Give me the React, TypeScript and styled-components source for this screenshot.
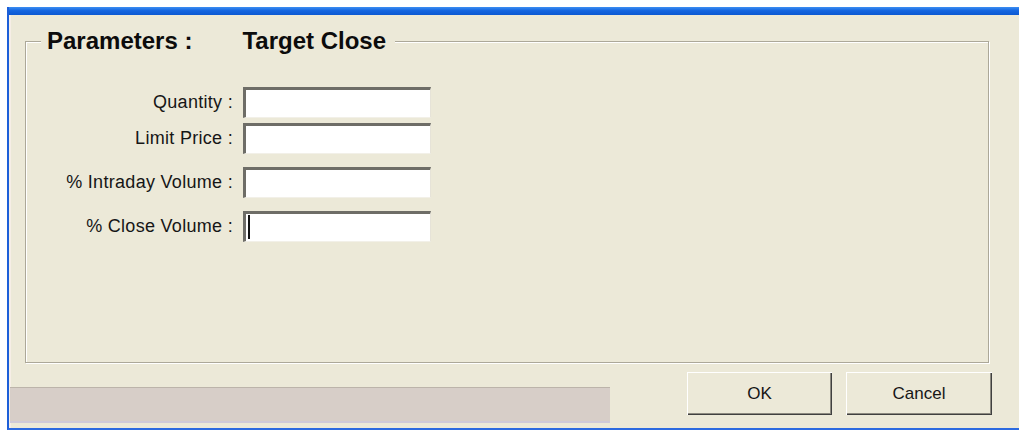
import styled, { createGlobalStyle } from 'styled-components';

const GlobalStyle = createGlobalStyle`
  html, body {
    margin: 0;
    padding: 0;
    background: #ffffff;
  }

  body {
    font-family: 'Liberation Sans', Arial, sans-serif;
    color: #111111;
  }
`;

const fields = [
  { label: 'Quantity :', gap: 0 },
  { label: 'Limit Price :', gap: 5 },
  { label: '% Intraday Volume :', gap: 13 },
  { label: '% Close Volume :', gap: 13, focused: true },
];

function App() {
  return (
    <>
      <GlobalStyle />
      <Page>
        <Window>
          <TitleStrip />
          <Client>
            <Group>
              <GroupTitle>
                <span>Parameters :</span>
                <GroupName>Target Close</GroupName>
              </GroupTitle>
              {fields.map((f) => (
                <Row key={f.label} $gap={f.gap}>
                  <Label>{f.label}</Label>
                  <FieldBox>
                    <TextInput type="text" defaultValue="" readOnly />
                    {f.focused && <Caret />}
                  </FieldBox>
                </Row>
              ))}
            </Group>

            <BottomRow>
              <StatusBar />
              <Buttons>
                <Button type="button">OK</Button>
                <Button type="button" $wide>
                  Cancel
                </Button>
              </Buttons>
            </BottomRow>
          </Client>
        </Window>
      </Page>
    </>
  );
}

export default App;

const Page = styled.div`
  width: 1019px;
  height: 430px;
  box-sizing: border-box;
  padding: 7px 0 0 7px;
  background: #ffffff;
  overflow: hidden;
`;

const Window = styled.div`
  display: flex;
  flex-direction: column;
  height: 423px;
  box-sizing: border-box;
  border-left: 2px solid #1d5fd8;
  border-bottom: 2px solid #2c6ae0;
`;

const TitleStrip = styled.div`
  height: 8px;
  flex-shrink: 0;
  background: linear-gradient(180deg, #3d8ef2 0%, #1466e0 45%, #0b58d2 100%);
`;

const Client = styled.div`
  flex: 1;
  display: flex;
  flex-direction: column;
  background: #ece9d8;
  box-shadow: inset 2px 0 0 #f6eee6;
`;

const Group = styled.fieldset`
  margin: 13px 30px 0 16px;
  padding: 33px 0 0 0;
  height: 335px;
  box-sizing: border-box;
  border: 1px solid #aca899;
  box-shadow: 1px 1px 0 #ffffff, inset 1px 1px 0 #ffffff;
  min-width: 0;
`;

const GroupTitle = styled.legend`
  margin-left: 15px;
  padding: 0 9px 0 6px;
  background: #ece9d8;
  font-size: 24px;
  line-height: 26px;
  font-weight: 700;
  color: #0c0c0c;
  white-space: nowrap;
`;

const GroupName = styled.span`
  margin-left: 50px;
`;

const Row = styled.div<{ $gap: number }>`
  display: grid;
  grid-template-columns: 207px 188px;
  column-gap: 10px;
  align-items: center;
  height: 31px;
  margin-top: ${(p) => p.$gap}px;
`;

const Label = styled.label`
  text-align: right;
  font-size: 18px;
  letter-spacing: 0.3px;
  color: #161616;
  white-space: nowrap;
`;

const FieldBox = styled.div`
  position: relative;
  height: 31px;
`;

const TextInput = styled.input`
  display: block;
  width: 188px;
  height: 31px;
  box-sizing: border-box;
  margin: 0;
  padding: 0 4px;
  background: #ffffff;
  border-style: solid;
  border-width: 3px 1px 1px 3px;
  border-color: #6e6d67 #e6e3d8 #f2f0e8 #6e6d67;
  outline: none;
  font-family: 'Liberation Sans', Arial, sans-serif;
  font-size: 17px;
`;

const Caret = styled.span`
  position: absolute;
  left: 5px;
  top: 4px;
  width: 2px;
  height: 24px;
  background: #111111;
`;

const BottomRow = styled.div`
  flex: 1;
  display: flex;
  align-items: flex-start;
  padding-right: 27px;
`;

const StatusBar = styled.div`
  width: 600px;
  height: 33px;
  margin: 24px 0 0 1px;
  background: #d7cec8;
  border-top: 1px solid #bcb4aa;
  border-bottom: 2px solid #cfcad8;
`;

const Buttons = styled.div`
  display: flex;
  gap: 14px;
  margin-left: auto;
  margin-top: 9px;
`;

const Button = styled.button<{ $wide?: boolean }>`
  width: ${(p) => (p.$wide ? 146 : 145)}px;
  height: 43px;
  margin: 0;
  padding: 0;
  background: #ece9d8;
  border: none;
  box-shadow: inset 1px 1px 0 #ffffff, inset -1px -1px 0 #404040, inset -2px -2px 0 #8c8a80;
  font-family: 'Liberation Sans', Arial, sans-serif;
  font-size: 17px;
  color: #161616;
  cursor: default;
`;
